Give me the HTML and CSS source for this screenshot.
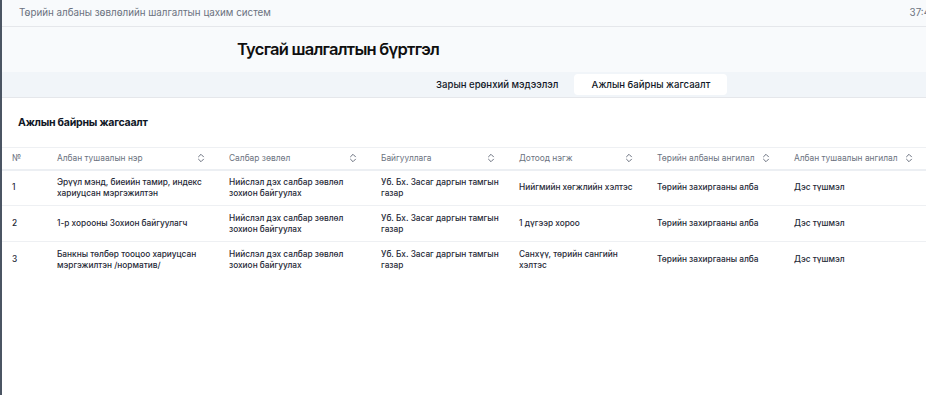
FILE: index.html
```html
<!DOCTYPE html>
<html lang="mn">
<head>
<meta charset="utf-8">
<link rel="stylesheet" href="styles.css">
</head>
<body>
<div class="frame">
  <header class="topbar">
    <span class="system">Төрийн албаны зөвлөлийн шалгалтын цахим систем</span>
    <span class="timer">37:4</span>
  </header>
  <section class="heading">
    <h1>Тусгай шалгалтын бүртгэл</h1>
  </section>
  <nav class="tabs">
    <span class="tab">Зарын ерөнхий мэдээлэл</span>
    <span class="tab active">Ажлын байрны жагсаалт</span>
  </nav>
  <main class="content">
    <h2>Ажлын байрны жагсаалт</h2>
    <table class="grid">
      <colgroup>
        <col class="c1"><col class="c2"><col class="c3"><col class="c4"><col class="c5"><col class="c6"><col class="c7">
      </colgroup>
      <thead>
        <tr>
          <th><span class="th">№</span></th>
          <th><span class="th">Албан тушаалын нэр <svg class="sort" viewBox="0 0 8 10"><path d="M1.5 3.8 4 1.3 6.5 3.8M1.5 6.2 4 8.7 6.5 6.2"/></svg></span></th>
          <th><span class="th">Салбар зөвлөл <svg class="sort" viewBox="0 0 8 10"><path d="M1.5 3.8 4 1.3 6.5 3.8M1.5 6.2 4 8.7 6.5 6.2"/></svg></span></th>
          <th><span class="th">Байгууллага <svg class="sort" viewBox="0 0 8 10"><path d="M1.5 3.8 4 1.3 6.5 3.8M1.5 6.2 4 8.7 6.5 6.2"/></svg></span></th>
          <th><span class="th">Дотоод нэгж <svg class="sort" viewBox="0 0 8 10"><path d="M1.5 3.8 4 1.3 6.5 3.8M1.5 6.2 4 8.7 6.5 6.2"/></svg></span></th>
          <th><span class="th tight">Төрийн албаны ангилал <svg class="sort" viewBox="0 0 8 10"><path d="M1.5 3.8 4 1.3 6.5 3.8M1.5 6.2 4 8.7 6.5 6.2"/></svg></span></th>
          <th><span class="th tight">Албан тушаалын ангилал <svg class="sort" viewBox="0 0 8 10"><path d="M1.5 3.8 4 1.3 6.5 3.8M1.5 6.2 4 8.7 6.5 6.2"/></svg></span></th>
        </tr>
      </thead>
      <tbody>
        <tr>
          <td>1</td>
          <td>Эрүүл мэнд, биеийн тамир, индекс<br>хариуцсан мэргэжилтэн</td>
          <td>Нийслэл дэх салбар зөвлөл<br>зохион байгуулах</td>
          <td>Уб. Бх. Засаг даргын тамгын<br>газар</td>
          <td>Нийгмийн хөгжлийн хэлтэс</td>
          <td>Төрийн захиргааны алба</td>
          <td>Дэс түшмэл</td>
        </tr>
        <tr>
          <td>2</td>
          <td>1-р хорооны Зохион байгуулагч</td>
          <td>Нийслэл дэх салбар зөвлөл<br>зохион байгуулах</td>
          <td>Уб. Бх. Засаг даргын тамгын<br>газар</td>
          <td>1 дүгээр хороо</td>
          <td>Төрийн захиргааны алба</td>
          <td>Дэс түшмэл</td>
        </tr>
        <tr>
          <td>3</td>
          <td>Банкны төлбөр тооцоо хариуцсан<br>мэргэжилтэн /норматив/</td>
          <td>Нийслэл дэх салбар зөвлөл<br>зохион байгуулах</td>
          <td>Уб. Бх. Засаг даргын тамгын<br>газар</td>
          <td>Санхүү, төрийн сангийн<br>хэлтэс</td>
          <td>Төрийн захиргааны алба</td>
          <td>Дэс түшмэл</td>
        </tr>
      </tbody>
    </table>
  </main>
</div>
</body>
</html>
```
FILE: styles.css
```css
* { box-sizing: border-box; }
html, body { margin: 0; padding: 0; }
body {
  font-family: Inter, "Noto Sans", "DejaVu Sans", sans-serif;
  background: #ffffff;
  color: #111827;
  width: 926px;
  height: 395px;
  overflow: hidden;
}
.frame {
  border-left: 2px solid #4b5563;
  height: 395px;
  display: flex;
  flex-direction: column;
}
.topbar {
  height: 27px;
  display: flex;
  align-items: center;
  justify-content: space-between;
  padding: 0 0 1px 17px;
  background: #f8fafc;
  border-bottom: 1px solid #e5e7eb;
  font-size: 9.8px;
  color: #6b7280;
  white-space: nowrap;
  overflow: hidden;
}
.timer { margin-right: -4px; color: #6b7280; }
.heading {
  height: 45px;
  background: #f8fafc;
  padding: 12px 0 0 235px;
}
.heading h1 {
  margin: 0;
  font-size: 16.5px;
  font-weight: 600;
  letter-spacing: -0.75px;
  color: #0f0f0f;
}
.tabs {
  height: 26px;
  background: #f1f5f9;
  border-bottom: 1px solid #e5e7eb;
  display: flex;
  align-items: center;
  padding-left: 418px;
}
.tab {
  font-size: 9.6px;
  font-weight: 500;
  color: #111827;
  padding: 0 16px;
  height: 21px;
  display: flex;
  align-items: center;
  border-radius: 4px;
  white-space: nowrap;
}
.tab.active {
  background: #ffffff;
  width: 153px;
  justify-content: center;
  padding: 0;
}
.content { flex: 1; background: #ffffff; }
.content h2 {
  margin: 0;
  padding: 18px 0 0 16px;
  height: 49px;
  font-size: 10.6px;
  font-weight: 700;
  letter-spacing: -0.25px;
  color: #111827;
}
.grid {
  width: 924px;
  border-collapse: collapse;
  table-layout: fixed;
}
col.c1 { width: 45px; }
col.c2 { width: 172px; }
col.c3 { width: 152px; }
col.c4 { width: 138px; }
col.c5 { width: 138px; }
col.c6 { width: 137px; }
col.c7 { width: 142px; }
.grid th {
  height: 22px;
  padding: 0 10px;
  border-top: 1px solid #eef0f3;
  border-bottom: 2px solid #eceff3;
  text-align: left;
  font-size: 8.4px;
  font-weight: 400;
  color: #6b7280;
  white-space: nowrap;
}
.th {
  display: flex;
  align-items: center;
  justify-content: space-between;
  padding-right: 4px;
}
.th.tight { justify-content: flex-start; gap: 7px; }
.sort {
  width: 8px;
  height: 10px;
  fill: none;
  stroke: #6b7280;
  stroke-width: 1;
  stroke-linecap: round;
  stroke-linejoin: round;
  flex: none;
}
.grid td {
  height: 36px;
  padding: 0 0 0 10px;
  border-bottom: 1px solid #eef0f3;
  font-size: 8.3px;
  font-weight: 500;
  line-height: 11px;
  color: #1f2937;
  vertical-align: middle;
  white-space: nowrap;
}
.grid tbody tr:last-child td { border-bottom: none; }
```
